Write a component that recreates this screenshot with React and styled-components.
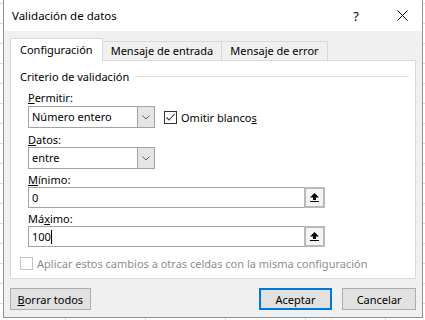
import styled, { createGlobalStyle } from "styled-components";

const GlobalStyle = createGlobalStyle`
  html, body { margin: 0; padding: 0; }
  body {
    font-family: "Noto Sans", "Segoe UI", sans-serif;
    font-size: 11px;
    color: #000;
  }
`;

const Desk = styled.div`
  width: 425px;
  height: 320px;
  overflow: hidden;
  box-sizing: border-box;
  padding-left: 3px;
  background-color: #fff;
  background-image: linear-gradient(#dadada 1px, transparent 1px),
    linear-gradient(90deg, #dadada 1px, transparent 1px);
  background-size: 80px 20px;
  background-position: 65px 3px;
`;

const Dialog = styled.div`
  width: 420px;
  height: 318px;
  box-sizing: border-box;
  border: 1px solid #939393;
  border-top: none;
  background: #f0f0f0;
  display: flex;
  flex-direction: column;
`;

const TitleBar = styled.div`
  height: 31px;
  flex: none;
  background: #fff;
  display: flex;
  align-items: center;
  padding: 0 14px 0 8px;
`;

const Title = styled.div`
  flex: 1;
  font-size: 11.5px;
  line-height: 15px;
`;

const HelpGlyph = styled.div`
  width: 12px;
  text-align: center;
  font-size: 13px;
  margin-right: 35px;
`;

const Body = styled.div`
  flex: 1;
  padding: 7px 6px 0 6px;
  display: flex;
  flex-direction: column;
`;

const TabStrip = styled.div`
  height: 22px;
  display: flex;
  align-items: flex-end;
`;

const Tab = styled.div`
  position: relative;
  box-sizing: border-box;
  height: ${(p) => (p.$active ? "23px" : "19px")};
  margin-bottom: ${(p) => (p.$active ? "-1px" : "0")};
  margin-left: ${(p) => (p.$first ? "0" : "-1px")};
  padding: ${(p) => (p.$active ? "3px 9px 0" : "1px 8px 0")};
  border: 1px solid #d9d9d9;
  border-bottom: none;
  background: ${(p) => (p.$active ? "#fff" : "#f0f0f0")};
  z-index: ${(p) => (p.$active ? 1 : 0)};
  line-height: 15px;
  white-space: nowrap;
`;

const Panel = styled.div`
  height: 219px;
  box-sizing: border-box;
  border: 1px solid #d9d9d9;
  background: #fff;
  padding: 8px 6px 0 9px;
`;

const Legend = styled.div`
  display: flex;
  align-items: center;
  line-height: 15px;
  color: #000;
`;

const LegendRule = styled.div`
  flex: 1;
  height: 1px;
  margin-left: 6px;
  background: #dcdcdc;
`;

const Fields = styled.div`
  margin-left: 8px;
`;

const Label = styled.div`
  line-height: 15px;
  margin-top: ${(p) => p.$gap}px;
`;

const Key = styled.span`
  text-decoration: underline;
  text-underline-offset: 1px;
`;

const Row = styled.div`
  display: flex;
  align-items: center;
  margin-top: ${(p) => p.$gap || 0}px;
`;

const Select = styled.div`
  width: 127px;
  height: 22px;
  box-sizing: border-box;
  border: 1px solid #a2a2a2;
  background: #fff;
  display: flex;
`;

const Value = styled.div`
  flex: 1;
  padding-left: 3px;
  line-height: 20px;
`;

const DropButton = styled.div`
  width: 16px;
  background: #e5e5e5;
  border-left: 1px solid #a2a2a2;
  display: flex;
  align-items: center;
  justify-content: center;
`;

const Check = styled.div`
  width: 13px;
  height: 13px;
  box-sizing: border-box;
  border: 1px solid ${(p) => (p.$disabled ? "#c4c4c4" : "#333")};
  background: #fff;
  display: flex;
  flex: none;
`;

const CheckLabel = styled.div`
  margin-left: ${(p) => p.$gap}px;
  line-height: 15px;
  color: ${(p) => (p.$disabled ? "#8d8d8d" : "#000")};
`;

const Input = styled.div`
  width: 297px;
  height: 21px;
  box-sizing: border-box;
  border: 1px solid #a2a2a2;
  background: #fff;
  display: flex;
`;

const Caret = styled.span`
  display: inline-block;
  width: 1px;
  height: 14px;
  background: #000;
  vertical-align: -3px;
`;

const PickButton = styled.div`
  width: 21px;
  margin: -1px -1px -1px 0;
  box-sizing: border-box;
  border: 2px solid #b9b9b9;
  background: #f4f4f4;
  display: flex;
  align-items: center;
  justify-content: center;
`;

const Footer = styled.div`
  display: flex;
  padding-top: 9px;
`;

const Button = styled.div`
  height: 22px;
  width: ${(p) => p.$width}px;
  box-sizing: border-box;
  margin-left: ${(p) => p.$gap || 0}px;
  border: ${(p) => (p.$default ? "2px solid #0078d7" : "1px solid #adadad")};
  background: #e1e1e1;
  display: flex;
  align-items: center;
  justify-content: center;
  line-height: 15px;
`;

const Chevron = () => (
  <svg width="8" height="5" viewBox="0 0 8 5">
    <polyline points="0.5,0.5 4,4 7.5,0.5" fill="none" stroke="#606060" strokeWidth="1" />
  </svg>
);

const CloseIcon = () => (
  <svg width="11" height="11" viewBox="0 0 11 11">
    <path d="M0.5 0.5 L10.5 10.5 M10.5 0.5 L0.5 10.5" stroke="#000" strokeWidth="1" />
  </svg>
);

const Tick = () => (
  <svg width="11" height="11" viewBox="0 0 11 11">
    <polyline points="1.5,5.5 4,8 9.5,2" fill="none" stroke="#333" strokeWidth="1.1" />
  </svg>
);

const CollapseIcon = () => (
  <svg width="9" height="9" viewBox="0 0 9 9">
    <path d="M4.5 0 L9 4.5 L6 4.5 L6 7 L3 7 L3 4.5 L0 4.5 Z" fill="#000" />
    <rect x="0" y="8" width="9" height="1" fill="#000" />
  </svg>
);

export default function App() {
  return (
    <>
      <GlobalStyle />
      <Desk>
        <Dialog>
          <TitleBar>
            <Title>Validación de datos</Title>
            <HelpGlyph>?</HelpGlyph>
            <CloseIcon />
          </TitleBar>
          <Body>
            <TabStrip>
              <Tab $active $first>Configuración</Tab>
              <Tab>Mensaje de entrada</Tab>
              <Tab>Mensaje de error</Tab>
            </TabStrip>
            <Panel>
              <Legend>
                Criterio de validación
                <LegendRule />
              </Legend>
              <Fields>
                <Label $gap={6}>
                  <Key>P</Key>ermitir:
                </Label>
                <Row $gap={1}>
                  <Select>
                    <Value>Número entero</Value>
                    <DropButton>
                      <Chevron />
                    </DropButton>
                  </Select>
                  <Check style={{ marginLeft: 9 }}>
                    <Tick />
                  </Check>
                  <CheckLabel $gap={4}>
                    Omitir blanco<Key>s</Key>
                  </CheckLabel>
                </Row>
                <Label $gap={4}>
                  <Key>D</Key>atos:
                </Label>
                <Row>
                  <Select>
                    <Value>entre</Value>
                    <DropButton>
                      <Chevron />
                    </DropButton>
                  </Select>
                </Row>
                <Label $gap={3}>
                  <Key>M</Key>ínimo:
                </Label>
                <Input>
                  <Value>0</Value>
                  <PickButton>
                    <CollapseIcon />
                  </PickButton>
                </Input>
                <Label $gap={3}>
                  Má<Key>x</Key>imo:
                </Label>
                <Input>
                  <Value>
                    100<Caret />
                  </Value>
                  <PickButton>
                    <CollapseIcon />
                  </PickButton>
                </Input>
              </Fields>
              <Row $gap={9}>
                <Check $disabled />
                <CheckLabel $gap={4} $disabled>
                  Aplicar estos cambios a otras celdas con la misma configuración
                </CheckLabel>
              </Row>
            </Panel>
            <Footer>
              <Button $width={81}>
                <span>
                  <Key>B</Key>orrar todos
                </span>
              </Button>
              <Button $width={74} $gap={168} $default>
                Aceptar
              </Button>
              <Button $width={74} $gap={10}>
                Cancelar
              </Button>
            </Footer>
          </Body>
        </Dialog>
      </Desk>
    </>
  );
}
